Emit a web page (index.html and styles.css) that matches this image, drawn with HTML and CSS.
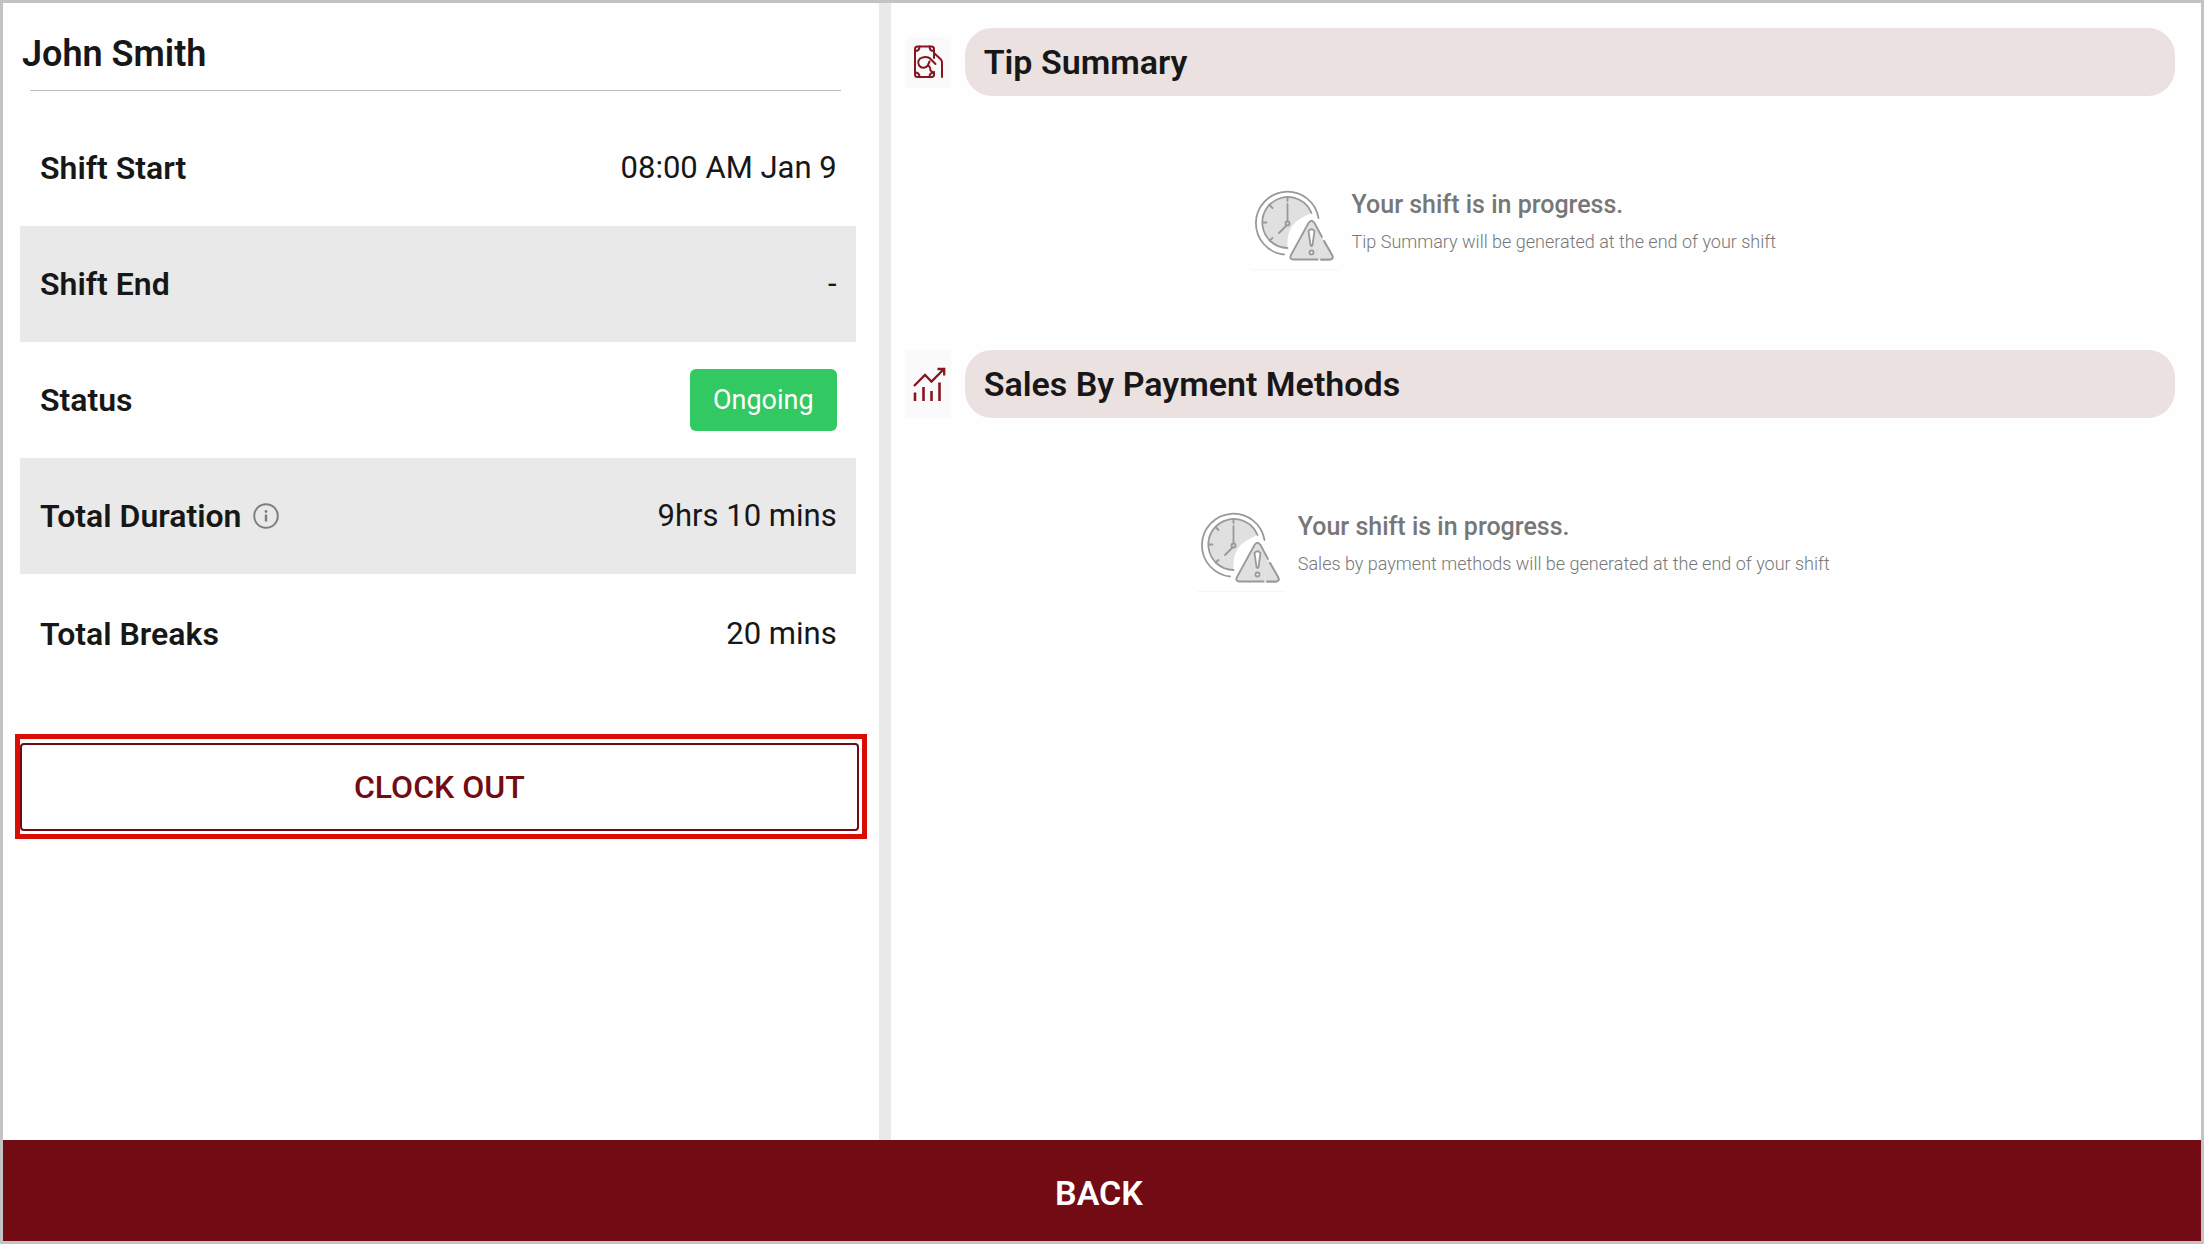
FILE: index.html
```html
<!DOCTYPE html>
<html lang="en">
<head>
<meta charset="utf-8">
<meta name="viewport" content="width=device-width, initial-scale=1">
<title>Shift details</title>
<link rel="stylesheet" href="styles.css">
</head>
<body>
<svg class="sprite" aria-hidden="true">
  <symbol id="shift-clock" viewBox="0 0 88 93">
    <rect width="88" height="93" fill="#fff"/>
    <path d="M0 92.500H88" stroke="#f6f6f6"/>
    <path d="M60.500 36A25.500 25.500 0 1 0 36.500 71Q35 50 49 42Q54 38.500 60.500 36Z" fill="#e0e0e0"/>
    <g fill="none" stroke="#999" stroke-width="1.800" stroke-linecap="round">
      <path d="M67.500 41A31.500 31.500 0 1 0 33 77.500"/>
      <path d="M60.500 36A25.500 25.500 0 1 0 36.500 71"/>
      <path d="M36.500 20V24M36.500 27V44M35 49L28 56M12 45.500H15.500M18.500 28L21.500 31M18.500 63.500L21.500 61"/>
      <circle cx="36.500" cy="46.500" r="2"/>
      <path d="M67 82.500H42Q38 82 40 78L57.500 46Q60.500 41.500 63.500 46L71 60M73 64L81 78Q83 82 79 82.500H70" fill="#e0e0e0"/>
      <path d="M71 60L73 64L81 78Q83 82 79 82.500H67Z" fill="#e0e0e0" stroke="none"/>
      <path d="M73 64L81 78Q83 82 79 82.500H70"/>
      <path d="M57.500 54Q60.500 50.500 63.500 54L61.500 68Q60.500 70 59.500 68Z" fill="#fff"/>
      <circle cx="60.500" cy="75.500" r="2" fill="#fff"/>
    </g>
  </symbol>
</svg>
<div class="screen">
  <div class="panels">
    <main class="shift">
      <h1 class="name">John Smith</h1>
      <dl class="facts">
        <div class="fact"><dt>Shift Start</dt><dd>08:00 AM Jan 9</dd></div>
        <div class="fact"><dt>Shift End</dt><dd>-</dd></div>
        <div class="fact"><dt>Status</dt><dd class="badge">Ongoing</dd></div>
        <div class="fact">
          <dt>Total Duration
            <svg class="info" viewBox="0 0 26 26" aria-hidden="true"><circle cx="13" cy="13" r="11.800" fill="none" stroke="#7d7d7d" stroke-width="2"/><path d="M13 11.500V18.500" stroke="#7d7d7d" stroke-width="2.400"/><circle cx="13" cy="8.500" r="1.400" fill="#7d7d7d"/></svg>
          </dt>
          <dd>9hrs 10 mins</dd>
        </div>
        <div class="fact"><dt>Total Breaks</dt><dd>20 mins</dd></div>
      </dl>
      <div class="highlight"><button class="clock-out" type="button">CLOCK OUT</button></div>
    </main>
    <aside class="reports">
      <section>
        <header class="report-head">
          <svg class="report-icon" viewBox="0 0 45 51" width="45" height="51" aria-hidden="true">
            <rect width="45" height="51" fill="#fafafa"/>
            <g fill="none" stroke="#86151f" stroke-width="2" stroke-linecap="round" stroke-linejoin="round">
              <path d="M28 21V12Q28 9.500 25.500 9.500H11.500Q9 9.500 9 12V37.500Q9 40 11.500 40H25.500Q28 40 28 37.500V35"/>
              <path d="M9 14Q13.500 14 13.500 9.500M28 14Q23.500 14 23.500 9.500M9 35.500Q13.500 35.500 13.500 40M28 35.500Q23.500 35.500 23.500 40"/>
              <path d="M28 16L34.500 22Q36 23.500 36 25.500V40"/>
              <path d="M29.500 27L23.500 21Q20 19.500 16.500 20.500A5.200 5.200 0 1 0 22 28L23.500 24.500M22 28Q24.500 30 24.500 33.500L27.500 36"/>
            </g>
          </svg>
          <h2>Tip Summary</h2>
        </header>
        <div class="empty">
          <svg class="empty-icon" aria-hidden="true"><use href="#shift-clock"/></svg>
          <div>
            <p class="empty-title">Your shift is in progress.</p>
            <p class="empty-text">Tip Summary will be generated at the end of your shift</p>
          </div>
        </div>
      </section>
      <section>
        <header class="report-head">
          <svg class="report-icon" viewBox="0 0 45 68" width="45" height="68" aria-hidden="true">
            <rect width="45" height="68" fill="#fafafa"/>
            <g fill="none" stroke="#86151f" stroke-width="2.300">
              <path d="M8 36L19 25L25.500 31.500L38 19M31.500 19H38.200V25.500"/>
              <path d="M9 42.500V51M17.500 37V51M25.500 41V51M33.500 32.500V51" stroke-width="2.600"/>
            </g>
          </svg>
          <h2>Sales By Payment Methods</h2>
        </header>
        <div class="empty">
          <svg class="empty-icon" aria-hidden="true"><use href="#shift-clock"/></svg>
          <div>
            <p class="empty-title">Your shift is in progress.</p>
            <p class="empty-text">Sales by payment methods will be generated at the end of your shift</p>
          </div>
        </div>
      </section>
    </aside>
  </div>
  <button class="back" type="button">BACK</button>
</div>
</body>
</html>
```
FILE: styles.css
```css
* {
  box-sizing: border-box;
}

body,
h1,
h2,
p,
dl,
dd {
  margin: 0;
}

body {
  font-family: Roboto, "Liberation Sans", sans-serif;
  color: #171717;
}

button {
  font: inherit;
  cursor: pointer;
}

.sprite {
  display: none;
}

.screen {
  display: flex;
  flex-direction: column;
  min-height: 100vh;
  border: 3px solid #c3c3c3;
  background: #fefefe;
}

.panels {
  display: grid;
  grid-template-columns: 21fr 31fr;
  flex: 1;
}

/* Shift panel */
.shift {
  padding: 20px 12px;
  border-right: 12px solid #e9e9e9;
}

.name {
  margin: 0 26px 19px 7px;
  padding: 5px 0 11px;
  font-size: 36px;
  font-weight: 600;
  line-height: 52px;
  background: linear-gradient(#bdbdbd, #bdbdbd) 8px 100% / 100% 1px no-repeat;
}

.facts {
  margin: 0 11px 0 5px;
}

.fact {
  display: flex;
  align-items: center;
  justify-content: space-between;
  min-height: 116px;
  padding: 0 19px 0 20px;
  font-size: 32px;
  line-height: 40px;
}

.fact:nth-child(even) {
  background: #e9e9e9;
}

.fact:last-child {
  min-height: 120px;
}

.fact dt {
  display: flex;
  align-items: center;
  gap: 12px;
  font-weight: 600;
}

.fact dd {
  font-size: 31px;
}

.info {
  width: 26px;
  height: 26px;
}

.fact .badge {
  padding: 11px 23px;
  border-radius: 6px;
  background: #33c962;
  color: #fff;
  font-size: 27px;
}

.highlight {
  margin-top: 40px;
  padding: 4px 3px 3px 0;
  border: 5px solid #da0d05;
}

.clock-out {
  width: 100%;
  height: 88px;
  border: 2px solid #720b13;
  border-radius: 4px;
  background: transparent;
  color: #720b13;
  font-size: 32px;
  font-weight: 500;
}

/* Report panel */
.reports {
  display: flex;
  flex-direction: column;
  gap: 80px;
  padding: 25px 26px 25px 15px;
}

.report-head {
  display: flex;
  align-items: center;
  gap: 14px;
}

.report-icon {
  flex: none;
}

.report-head h2 {
  flex: 1;
  padding: 0 19px;
  border-radius: 27px;
  background: #ece1e1;
  font-size: 34px;
  font-weight: 600;
  line-height: 68px;
}

.empty {
  display: flex;
  justify-content: center;
  gap: 13px;
  margin-top: 81px;
  padding-right: 54px;
  color: #777;
}

.empty-icon {
  flex: none;
  width: 88px;
  height: 93px;
}

.empty-title {
  margin-top: 10px;
  font-size: 25px;
  font-weight: 500;
  line-height: 36px;
}

.empty-text {
  font-size: 18px;
  font-weight: 300;
  line-height: 38px;
}

.back {
  height: 101px;
  padding: 4px 6px 0 0;
  border: 0;
  background: #720b13;
  color: #fff;
  font-size: 34px;
  font-weight: 600;
}
```
